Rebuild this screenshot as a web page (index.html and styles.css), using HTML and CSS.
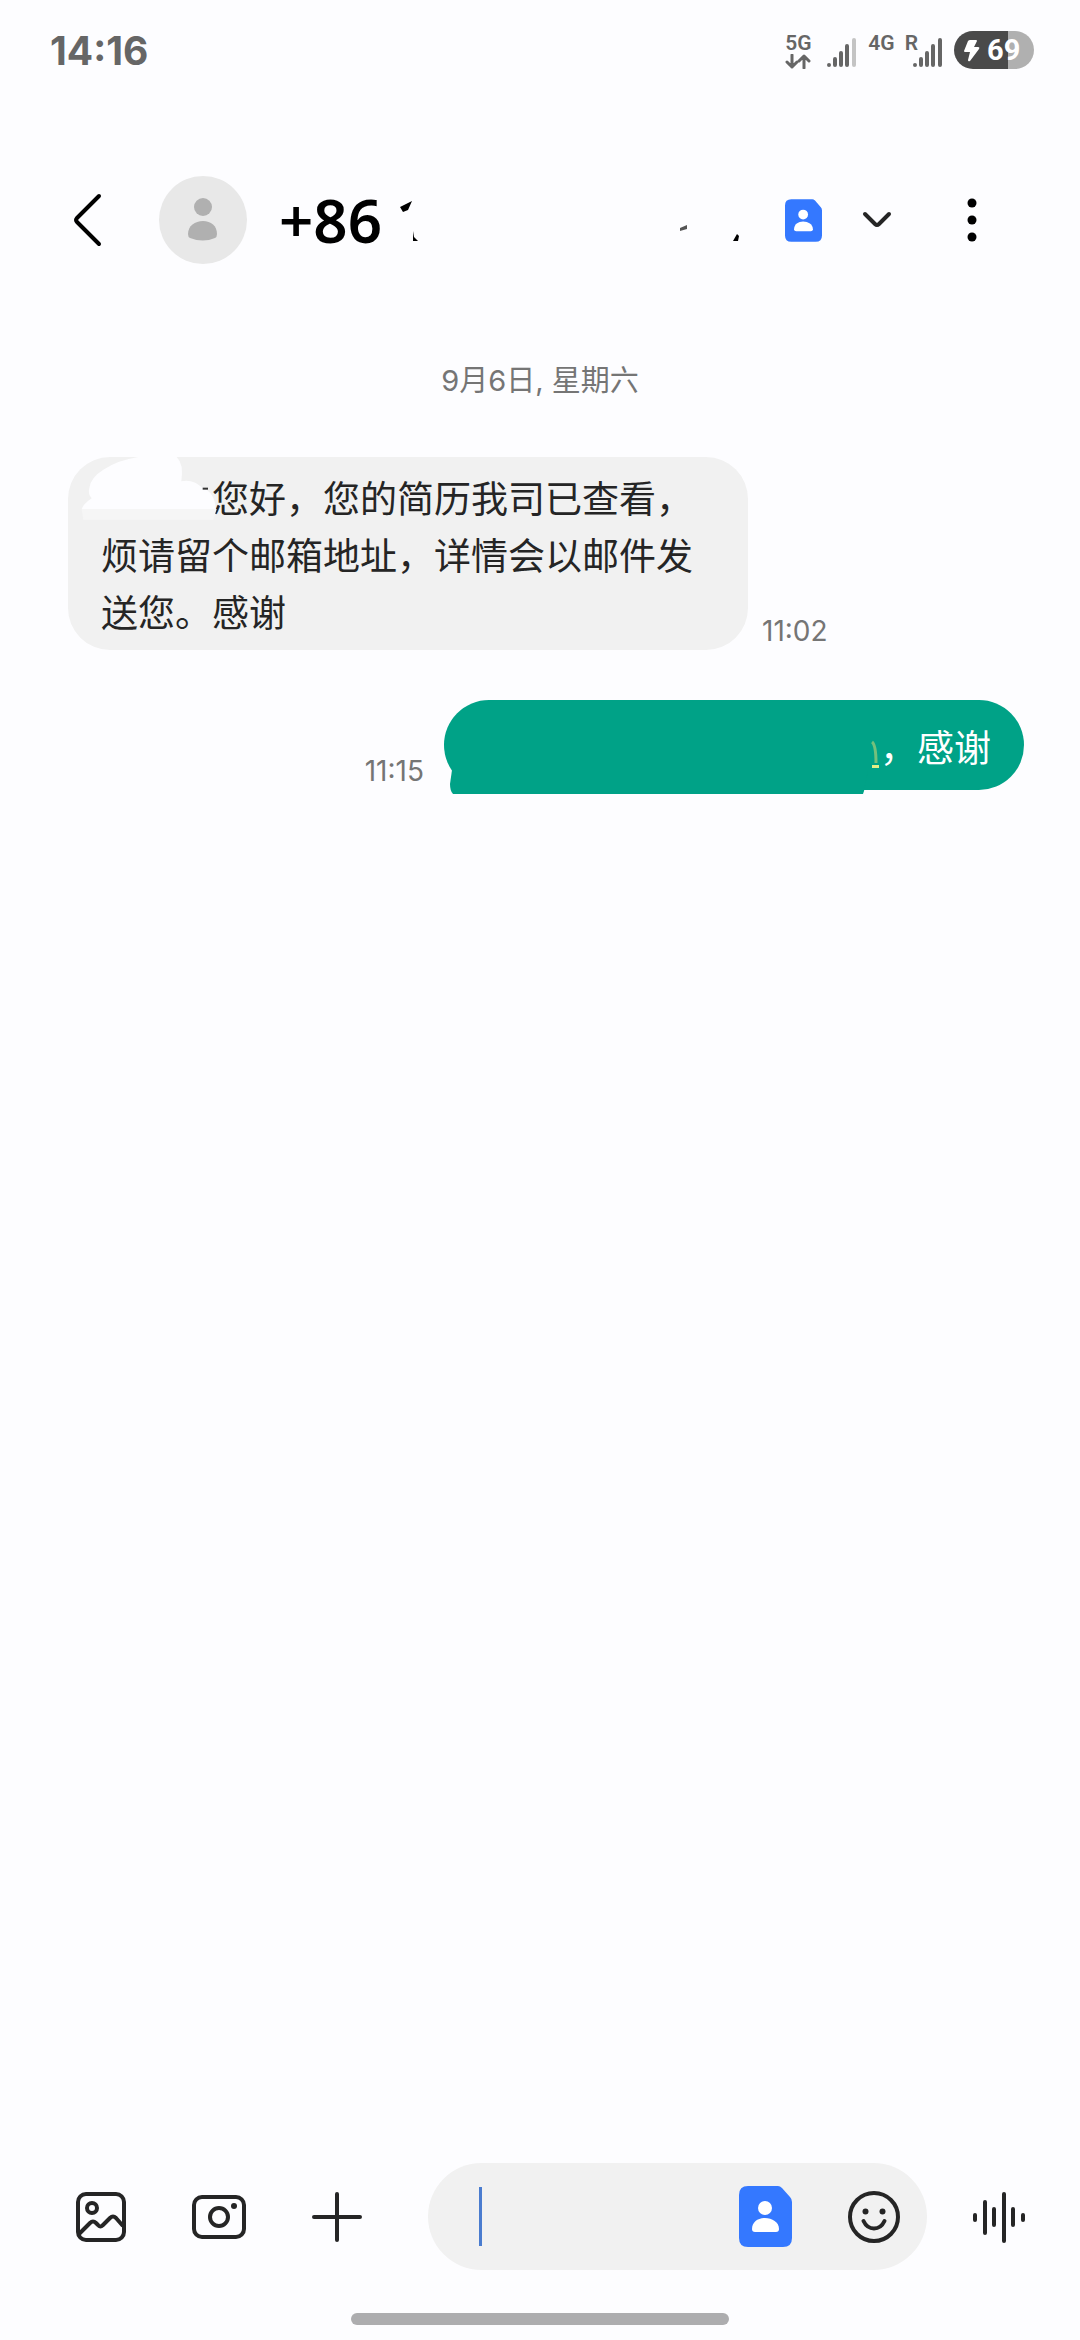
FILE: index.html
```html
<!DOCTYPE html>
<html lang="zh-CN">
<head>
<meta charset="utf-8">
<meta name="viewport" content="width=device-width, initial-scale=1">
<title>信息</title>
<link rel="stylesheet" href="styles.css">
</head>
<body>
<svg class="defs" aria-hidden="true">
  <symbol id="card" viewBox="0 0 53 61">
    <path fill="#3478ff" d="M9 0H39Q41 0 43 2L51 11Q53 13 53 16V52Q53 61 44 61H9Q0 61 0 52V9Q0 0 9 0Z"/>
    <circle cx="26" cy="22" r="7" fill="#fff"/>
    <path fill="#fff" d="M13 43C13 36 19 32 26 32S40 36 40 43Q40 46 37 46H16Q13 46 13 43Z"/>
  </symbol>
</svg>
<div class="screen">
  <div class="status">
    <time class="clock">14:16</time>
    <div class="network">
      <div class="net5g">
        <span class="net-label">5G</span>
        <svg width="26" height="15" viewBox="0 0 26 15" fill="none" stroke="#666" stroke-width="3" stroke-linecap="round" stroke-linejoin="round"><path d="M7 1V13M2 8L7 13L12 8M19 14V2M14 7L19 2L24 7"/></svg>
      </div>
      <svg class="signal" width="29" height="30" viewBox="0 0 29 30" stroke="#666" stroke-width="4" stroke-linecap="round"><path d="M2 27V27.1M8 21V27M14 15V27M20 8V27"/><path stroke="#c4c4c4" d="M27 2V27"/></svg>
      <span class="net-label net4g">4G</span>
      <span class="net-label">R</span>
      <svg class="signal2" width="29" height="30" viewBox="0 0 29 30" stroke="#666" stroke-width="4" stroke-linecap="round"><path d="M2 27V27.1M8 21V27M14 15V27M20 8V27M27 2V27"/></svg>
      <div class="battery">
        <svg width="16" height="23" viewBox="0 0 16 23" fill="#fff"><path d="M6 1H12Q13 1 13 2L10 8H14Q16 8 15 10L6 22Q4 23 4 21L6 13H1Q0 13 0 12L4 2Q5 1 6 1Z"/></svg>
        <span>69</span>
      </div>
    </div>
  </div>

  <header class="header">
    <button class="back" type="button" aria-label="返回"><svg width="30" height="54" viewBox="0 0 30 54" fill="none" stroke="#000" stroke-width="4" stroke-linecap="round" stroke-linejoin="round"><path d="M26 3L4 25Q2 27 4 29L26 51"/></svg></button>
    <svg class="avatar" width="88" height="88" viewBox="0 0 88 88"><circle cx="44" cy="44" r="44" fill="#e8e8e8"/><g fill="#b0b0b0"><circle cx="44" cy="31" r="9"/><path d="M29 58C29 50 36 45 44 45S58 50 58 58Q58 61 56 62Q44 67 31 62Q29 61 29 58Z"/></g></svg>
    <h1 class="title">+86</h1>
    <svg class="erased" width="344" height="44" viewBox="0 0 344 44" aria-hidden="true"><path d="M4 9L16 3L12 12L7 14ZM17 33L18 39L22 43H17ZM337 43L341 36L343 38L342 43Z"/><path fill="#555" d="M284 30L291 27V31L284 33Z"/></svg>
    <button class="sim" type="button" aria-label="SIM 卡"><svg width="37" height="43"><use href="#card"/></svg>
      <svg width="30" height="18" viewBox="0 0 30 18" fill="none" stroke="#252525" stroke-width="4" stroke-linecap="round" stroke-linejoin="round"><path d="M3 3L13 13Q15 15 17 13L27 3"/></svg></button>
    <button class="more" type="button" aria-label="更多"><svg width="10" height="44" viewBox="0 0 10 44"><circle cx="5" cy="5" r="4.5"/><circle cx="5" cy="22" r="4.5"/><circle cx="5" cy="39" r="4.5"/></svg></button>
  </header>

  <main class="thread">
    <p class="date">9月6日, 星期六</p>
    <div class="row">
      <div class="bubble received">
        <p>您好，您的简历我司已查看，烦请留个邮箱地址，详情会以邮件发送您。感谢</p>
        <svg class="mask" width="150" height="64" viewBox="54 79 450 192" aria-hidden="true"><path fill="#f6f6f6" d="M95 235H500L490 267H100Z"/><path fill="#fdfdff" d="M118 172Q122 140 160 117Q205 88 265 79H380Q402 100 394 152Q430 145 455 170Q495 185 497 235H95Q100 220 125 203Q113 190 118 172Z"/><path fill="#333" d="M458 171H474V177H458Z"/></svg>
      </div>
      <time class="time">11:02</time>
    </div>
    <div class="row mine">
      <time class="time">11:15</time>
      <div class="bubble sent">
        <svg class="mask" width="436" height="94" viewBox="0 0 436 94" aria-hidden="true"><path fill="#00a287" d="M8 70H424L420 91L419 94H9Q6 91 6 84Z"/><path fill="none" stroke="#74c07c" stroke-width="3" d="M428 42Q432 45 432 63"/><path fill="#e4ee86" d="M428 65H435V68H428Z"/></svg>
        <p>，感谢</p>
      </div>
    </div>
  </main>

  <footer class="composer">
    <button type="button" aria-label="图片"><svg width="50" height="50" viewBox="0 0 50 50" fill="none" stroke="#252525" stroke-width="4" stroke-linejoin="round"><rect x="2" y="2" width="46" height="46" rx="8"/><circle cx="16" cy="16" r="5"/><path d="M3 42L14 31Q17 28 20 31L22 33Q24 36 27 33L34 26Q37 23 40 26L47 34"/></svg></button>
    <button type="button" aria-label="相机"><svg width="54" height="44" viewBox="0 0 54 44" fill="none" stroke="#252525" stroke-width="4"><rect x="2" y="2" width="50" height="40" rx="8"/><circle cx="27" cy="22" r="9"/><circle cx="42" cy="11" r="3" fill="#252525" stroke="none"/></svg></button>
    <button type="button" aria-label="添加"><svg width="50" height="50" viewBox="0 0 50 50" stroke="#252525" stroke-width="4" stroke-linecap="round"><path d="M25 2V48M2 25H48"/></svg></button>
    <div class="field">
      <span class="caret"></span>
      <input type="text" aria-label="输入信息">
      <button class="field-sim" type="button" aria-label="选择 SIM 卡"><svg width="53" height="61"><use href="#card"/></svg></button>
      <button type="button" aria-label="表情"><svg width="52" height="52" viewBox="0 0 52 52" fill="none" stroke="#252525" stroke-width="4" stroke-linecap="round"><circle cx="26" cy="26" r="24"/><path d="M15.500 30Q19 37.500 26 37.500T36.500 30"/><g fill="#252525" stroke="none"><circle cx="17.500" cy="20.500" r="3"/><circle cx="34.500" cy="20.500" r="3"/></g></svg></button>
    </div>
    <button class="voice" type="button" aria-label="语音"><svg width="52" height="52" viewBox="0 0 52 52" stroke="#252525" stroke-width="4" stroke-linecap="round"><path d="M2 24V29M12 11V42M21 18V34M31 3V50M40 18V34M50 24V29"/></svg></button>
  </footer>
  <div class="home"></div>
</div>
</body>
</html>
```
FILE: styles.css
```css
* { box-sizing: border-box; }

body {
  margin: 0;
  background: #fdfdff;
  color: #252525;
  font-family: Inter, "Noto Sans CJK SC", sans-serif;
}

p, h1 { margin: 0; }

svg { display: block; flex: none; }

button {
  display: flex;
  align-items: center;
  padding: 0;
  border: 0;
  background: none;
}

.defs { position: absolute; width: 0; height: 0; }

.screen {
  display: flex;
  flex-direction: column;
  min-height: 100vh;
}

.status {
  display: flex;
  align-items: center;
  justify-content: space-between;
  height: 100px;
  padding: 0 46px 0 50px;
  color: #666;
}

.clock {
  font-size: 39px;
  font-weight: 700;
}

.network {
  display: flex;
  align-items: flex-start;
  height: 38px;
  font-family: Roboto, sans-serif;
}

.net-label {
  padding-top: 2px;
  font-size: 21px;
  line-height: 21px;
  font-weight: 600;
}

.net5g {
  display: flex;
  flex-direction: column;
  width: 28px;
}

.signal { margin: 7px 12px 0 14px; }
.signal2 { margin: 7px 12px 0 -5px; }
.net4g { margin-right: 10px; }

.battery {
  display: flex;
  align-items: center;
  gap: 7px;
  width: 80px;
  height: 38px;
  padding-left: 10px;
  border-radius: 19px;
  background: linear-gradient(90deg, #4a4a4a 68%, #b0b0b0 68%);
  color: #fff;
  font-size: 29px;
  font-weight: 700;
}

.header {
  display: flex;
  align-items: center;
  height: 240px;
  padding: 0 103px 0 73px;
}

.avatar { margin: 0 32px 0 56px; }

.title {
  color: #000;
  font-family: "Noto Sans", sans-serif;
  font-size: 60px;
  line-height: 72px;
  font-weight: 600;
}

.erased { margin: 0 auto 0 14px; }

.sim { gap: 40px; }
.more { margin-left: 75px; }

.thread {
  display: flex;
  flex: 1;
  flex-direction: column;
  padding: 19px 56px 0 68px;
}

.date {
  margin-bottom: 54px;
  padding-right: 12px;
  color: #757575;
  font-size: 29px;
  line-height: 44px;
  text-align: center;
}

.row {
  display: flex;
  align-items: flex-end;
  gap: 14px;
  margin-bottom: 50px;
}

.mine { justify-content: flex-end; gap: 20px; }

.time {
  padding-bottom: 2px;
  color: #757575;
  font-size: 28px;
  line-height: 34px;
}

.bubble {
  position: relative;
  font-size: 37px;
  line-height: 57px;
}

.received {
  width: 680px;
  padding: 14px 32px 8px 33px;
  border-radius: 42px;
  background: #f1f1f1;
}

.received p { text-indent: 3em; }

.sent {
  padding: 20px 33px 13px 436px;
  border-radius: 45px;
  background: #00a287;
  color: #fff;
}

.mask {
  position: absolute;
  top: 0;
  left: 0;
}

.composer {
  display: flex;
  align-items: center;
  gap: 66px;
  padding: 0 55px 0 76px;
}

.voice { margin-left: -20px; }

.field {
  display: flex;
  flex: 1;
  align-items: center;
  min-width: 0;
  height: 107px;
  padding: 0 27px 0 51px;
  border-radius: 54px;
  background: #f1f1f1;
}

.caret {
  flex: none;
  width: 3px;
  height: 59px;
  background: #4a7ccf;
}

.field input {
  flex: 1;
  min-width: 0;
  height: 60px;
  padding: 0;
  border: 0;
  outline: 0;
  background: none;
  font: inherit;
  font-size: 37px;
}

.field-sim { margin-right: 56px; }

.home {
  width: 378px;
  height: 12px;
  margin: 43px 0 15px;
  align-self: center;
  border-radius: 6px;
  background: #adadaf;
}
```
